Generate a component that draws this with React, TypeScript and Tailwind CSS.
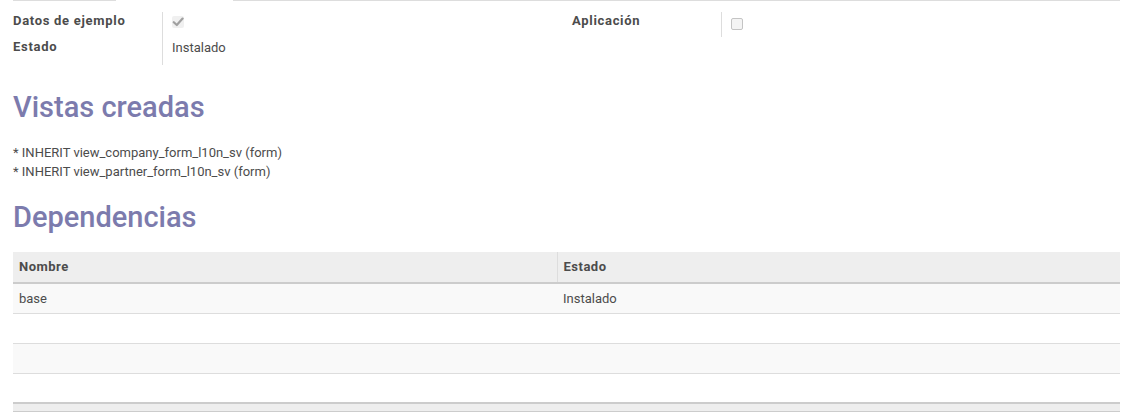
import React from 'react';

function DisabledCheck() {
  return (
    <span className="flex h-[12px] w-[12px] items-center justify-center rounded-[2px] bg-[#f0f0f0]">
      <svg width="12" height="12" viewBox="0 0 12 12">
        <path d="M1.8 6.2 L4.8 9 L10.6 2.6" fill="none" stroke="#a0a0a0" strokeWidth="2.2" strokeLinecap="round" strokeLinejoin="round" />
      </svg>
    </span>
  );
}

function EmptyCheck() {
  return <span className="block h-[12px] w-[12px] rounded-[2px] border border-[#c4c4c4] bg-[#f4f4f4]" />;
}

const rows = [
  { nombre: 'base', estado: 'Instalado' },
  { nombre: '', estado: '' },
  { nombre: '', estado: '' },
  { nombre: '', estado: '' },
];

export default function App() {
  return (
    <main className="min-h-screen bg-white text-[13px] text-[#4c4c4c]" style={{ fontFamily: 'Roboto, "Noto Sans", sans-serif' }}>
      {/* notebook tab line */}
      <div className="flex pl-[13px] pr-[10px]">
        <div className="w-[103px] border-t border-[#dddddd]" />
        <div className="w-[117px]" />
        <div className="flex-1 border-t border-[#dddddd]" />
      </div>

      {/* form groups */}
      <div className="grid grid-cols-[559px_1fr] pl-[13px] pr-[10px] pt-[10px]">
        <div className="flex">
          <div className="w-[149px] font-bold tracking-[0.7px]">
            <div className="leading-[20px]">Datos de ejemplo</div>
            <div className="mt-[6px] leading-[20px]">Estado</div>
          </div>
          <div className="mt-[1px] h-[53px] border-l border-[#dddddd] pl-[9px]">
            <div className="pt-[4px]">
              <DisabledCheck />
            </div>
            <div className="mt-[10px] leading-[20px]">Instalado</div>
          </div>
        </div>
        <div className="flex">
          <div className="w-[149px] font-bold tracking-[0.7px]">
            <div className="leading-[20px]">Aplicación</div>
          </div>
          <div className="mt-[1px] h-[25px] border-l border-[#dddddd] pl-[9px] pt-[6px]">
            <EmptyCheck />
          </div>
        </div>
      </div>

      <div className="pl-[13px] pr-[10px]">
        <h2 className="mt-[24px] text-[29px] font-medium leading-[36px] text-[#7c7bad]">Vistas creadas</h2>
        <div className="mt-[18px] leading-[19px]">
          <div>* INHERIT view_company_form_l10n_sv (form)</div>
          <div>* INHERIT view_partner_form_l10n_sv (form)</div>
        </div>
        <h2 className="mt-[18px] text-[29px] font-medium leading-[36px] text-[#7c7bad]">Dependencias</h2>

        <table className="mt-[17px] w-full border-collapse text-left">
          <thead>
            <tr className="h-[31px] border-b-2 border-[#cccccc] bg-[#eeeeee]">
              <th className="w-[544px] border-r border-[#dddddd] pl-[6px] font-bold tracking-[0.5px]">Nombre</th>
              <th className="pl-[6px] font-bold tracking-[0.5px]">Estado</th>
            </tr>
          </thead>
          <tbody>
            {rows.map((r, i) => (
              <tr key={i} className={`h-[30px] border-b border-[#dddddd] ${i % 2 === 0 ? 'bg-[#f9f9f9]' : 'bg-white'}`}>
                <td className="pl-[6px]">{r.nombre}</td>
                <td className="pl-[6px]">{r.estado}</td>
              </tr>
            ))}
          </tbody>
          <tfoot>
            <tr className="h-[8px] border-t-2 border-b border-[#cccccc] bg-[#eeeeee]">
              <td />
              <td />
            </tr>
          </tfoot>
        </table>
      </div>
    </main>
  );
}
